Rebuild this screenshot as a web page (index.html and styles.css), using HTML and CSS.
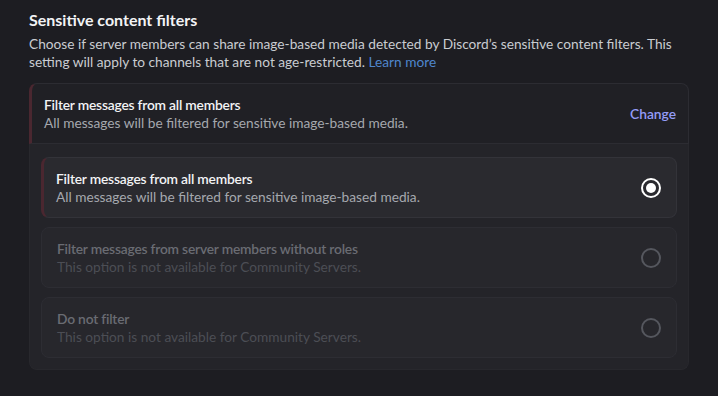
FILE: index.html
```html
<!DOCTYPE html>
<html>
<head>
<meta charset="utf-8">
<link rel="stylesheet" href="styles.css">
</head>
<body>
<div class="page">
  <h2 class="title">Sensitive content filters</h2>
  <p class="desc"><span>Choose if server members can share image-based media detected by Discord’s sensitive content filters. This setting will apply to channels that are not age-restricted.</span> <a class="link">Learn more</a></p>
  <div class="card">
    <div class="card-head">
      <div class="texts">
        <div class="opt-title">Filter messages from all members</div>
        <div class="opt-sub">All messages will be filtered for sensitive image-based media.</div>
      </div>
      <span class="change">Change</span>
    </div>
    <div class="card-body">
      <div class="option selected">
        <div class="texts">
          <div class="opt-title">Filter messages from all members</div>
          <div class="opt-sub">All messages will be filtered for sensitive image-based media.</div>
        </div>
        <span class="radio on"></span>
      </div>
      <div class="option disabled">
        <div class="texts">
          <div class="opt-title">Filter messages from server members without roles</div>
          <div class="opt-sub">This option is not available for Community Servers.</div>
        </div>
        <span class="radio"></span>
      </div>
      <div class="option disabled">
        <div class="texts">
          <div class="opt-title">Do not filter</div>
          <div class="opt-sub">This option is not available for Community Servers.</div>
        </div>
        <span class="radio"></span>
      </div>
    </div>
  </div>
</div>
</body>
</html>
```
FILE: styles.css
```css
* { box-sizing: border-box; }
html, body { margin: 0; height: 100%; }
body {
  background: #1d1d22;
  font-family: Lato, "Noto Sans", sans-serif;
  color: #dbdee1;
}
.page { padding: 9px 29px 0 29px; }
.title {
  margin: 0;
  font-size: 16px;
  font-weight: 700;
  line-height: 22px;
  color: #f2f3f5;
}
.desc {
  margin: 4px 0 0 0;
  font-size: 13.7px;
  line-height: 18px;
  color: #c9ccd1;
}
.link { color: #4f86cc; }
.card { margin-top: 12px; }
.card-head {
  height: 61px;
  display: flex;
  align-items: center;
  justify-content: space-between;
  background: #202025;
  border: 1px solid #2c2c32;
  border-left: 3px solid #4a2730;
  border-radius: 8px 8px 0 0;
  padding: 0 12px;
}
.opt-title {
  font-size: 13.8px;
  font-weight: 600;
  letter-spacing: -0.2px;
  line-height: 18px;
  color: #f2f3f5;
}
.opt-sub {
  font-size: 13.7px;
  line-height: 18px;
  color: #a5a8ae;
}
.change { font-size: 13.8px; font-weight: 600; color: #949cf7; }
.card-body {
  background: #242429;
  border: 1px solid #28282d;
  border-top: 0;
  border-radius: 0 0 8px 8px;
  padding: 13px 11px 11px 11px;
  display: flex;
  flex-direction: column;
  gap: 9px;
}
.option {
  height: 61px;
  display: flex;
  align-items: center;
  justify-content: space-between;
  background: #2a2a2f;
  border: 1px solid #333339;
  border-radius: 8px;
  padding: 0 15px 0 12px;
}
.option.selected { border-left: 3px solid #4a2730; }
.option.disabled {
  padding-left: 15px;
  background: #27272c;
  border-color: #2d2d33;
}
.option.disabled .opt-title { color: #6a6c73; }
.option.disabled .opt-sub { color: #4c4e55; }
.radio {
  width: 20px; height: 20px;
  border-radius: 50%;
  border: 2px solid #55575e;
  display: flex; align-items: center; justify-content: center;
}
.radio.on { border-color: #ffffff; }
.radio.on::after {
  content: "";
  width: 10px; height: 10px;
  border-radius: 50%;
  background: #ffffff;
}
```
